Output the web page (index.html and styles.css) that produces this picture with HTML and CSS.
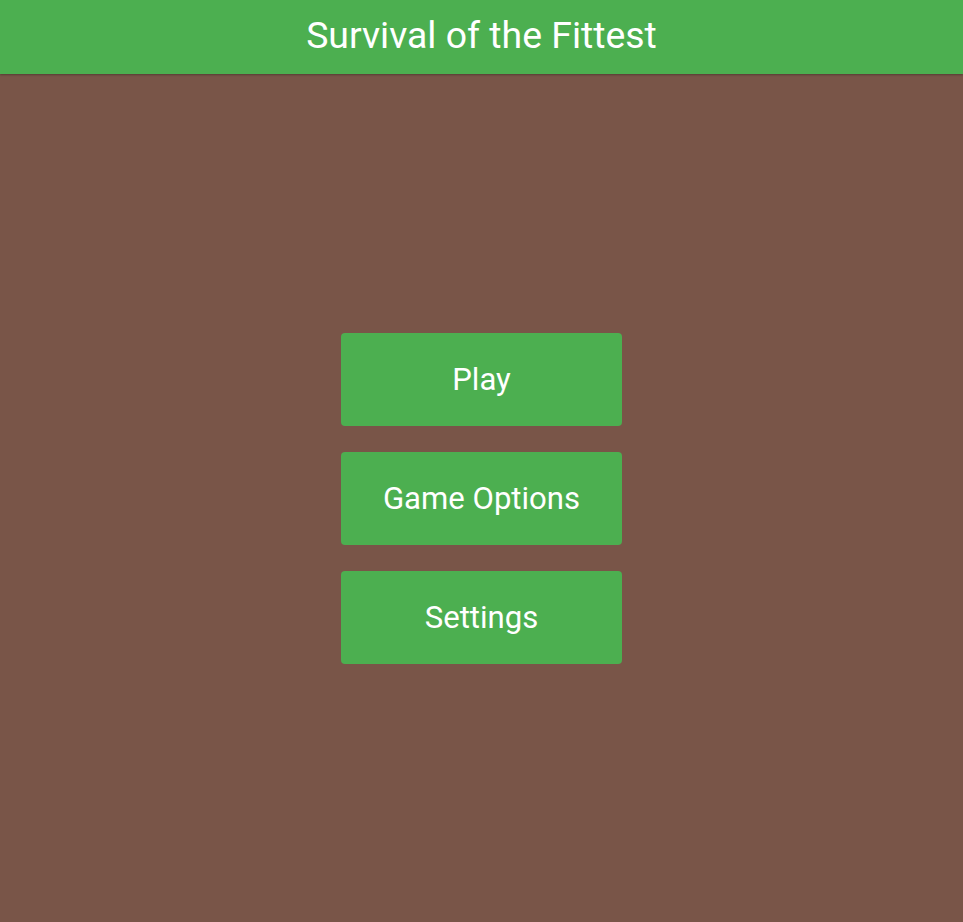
FILE: index.html
```html
<!DOCTYPE html>
<html lang="en">
<head>
<meta charset="utf-8">
<title>Survival of the Fittest</title>
<link rel="stylesheet" href="styles.css">
</head>
<body>
<div class="app">
  <header class="topbar">
    <h1 class="title">Survival of the Fittest</h1>
  </header>
  <main class="menu-area">
    <nav class="menu">
      <button class="menu-btn">Play</button>
      <button class="menu-btn">Game Options</button>
      <button class="menu-btn">Settings</button>
    </nav>
  </main>
</div>
</body>
</html>
```
FILE: styles.css
```css
html, body {
  margin: 0;
  padding: 0;
  height: 100%;
}
body {
  background: #795548;
  font-family: Roboto, "Noto Sans", "Liberation Sans", sans-serif;
  color: #fff;
}
.app {
  display: flex;
  flex-direction: column;
  height: 100%;
}
.topbar {
  height: 74px;
  background: #4caf50;
  display: flex;
  align-items: center;
  justify-content: center;
  box-shadow: 0 1px 2px rgba(0, 0, 0, 0.3);
  position: relative;
  z-index: 1;
  flex: none;
}
.title {
  margin: 0;
  font-size: 37.4px;
  font-weight: 400;
  line-height: 1;
  padding-bottom: 2px;
}
.menu-area {
  flex: 1;
  display: flex;
  align-items: center;
  justify-content: center;
  padding-top: 1px;
}
.menu {
  display: flex;
  flex-direction: column;
  gap: 25.5px;
}
.menu-btn {
  width: 281px;
  height: 93.5px;
  background: #4caf50;
  color: #fff;
  border: none;
  border-radius: 4px;
  font-family: Roboto, "Noto Sans", "Liberation Sans", sans-serif;
  font-size: 31.1px;
  font-weight: 400;
  padding: 0;
  cursor: pointer;
}
```
